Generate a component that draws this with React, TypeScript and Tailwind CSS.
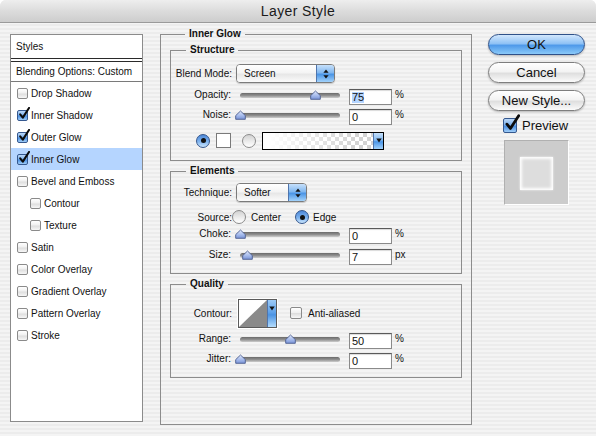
import React from "react";

type CbSize = "s" | "m" | "l";

function CheckBox({ checked, size = "s" }: { checked?: boolean; size?: CbSize }) {
  const box =
    size === "l" ? "w-[14px] h-[15px]" : size === "m" ? "w-[12px] h-[12px]" : "w-[11px] h-[11px]";
  const svgBox =
    size === "l"
      ? "absolute left-[1px] top-[-4px] w-[16px] h-[18px]"
      : "absolute left-[1px] top-[-3px] w-[12px] h-[13px]";
  return (
    <span className={`relative inline-block shrink-0 ${box}`}>
      <span
        className={`block w-full h-full rounded-[2px] border ${
          checked
            ? "border-[#35588f] bg-[linear-gradient(#bcd8f8,#7db2ee_45%,#4a8fe2_55%,#9fcdf8)]"
            : "border-[#8a8a8a] bg-[linear-gradient(#ffffff,#f0f0f0_45%,#dedede_55%,#f7f7f7)]"
        }`}
      />
      {checked && (
        <svg className={svgBox} viewBox="0 0 12 13" fill="none">
          <path
            d="M2.2 7.4 L4.8 10.6 L11 1"
            stroke="#0c0c0c"
            strokeWidth="2.1"
            strokeLinecap="round"
            strokeLinejoin="round"
          />
        </svg>
      )}
    </span>
  );
}

function Radio({ on }: { on?: boolean }) {
  return (
    <span
      className={`w-[14px] h-[14px] rounded-full border flex items-center justify-center shrink-0 ${
        on
          ? "border-[#34568c] bg-[linear-gradient(#4d88d8,#7fb4ef_55%,#c8e4fd)]"
          : "border-[#8a8a8a] bg-[linear-gradient(#d2d2d2,#ececec_55%,#ffffff)]"
      }`}
    >
      {on && <span className="w-[5px] h-[5px] rounded-full bg-[#111]" />}
    </span>
  );
}

function UpDown() {
  return (
    <svg width="6" height="10" viewBox="0 0 6 10">
      <path d="M3 0.5 L5.6 3.8 H0.4 Z" fill="#111" />
      <path d="M3 9.5 L5.6 6.2 H0.4 Z" fill="#111" />
    </svg>
  );
}

function Down() {
  return (
    <svg width="6" height="5" viewBox="0 0 6 5">
      <path d="M0.3 0.5 H5.7 L3 4.6 Z" fill="#111" />
    </svg>
  );
}

function Popup({ label, w }: { label: string; w: string }) {
  return (
    <div
      className={`flex h-[19px] ${w} rounded-[4px] border border-[#7b7b7b] overflow-hidden shadow-[0_1px_1px_rgba(0,0,0,0.18)]`}
    >
      <div className="flex-1 flex items-center pl-[7px] text-[10px] bg-[linear-gradient(#ffffff,#f4f4f4_45%,#e7e7e7_55%,#fbfbfb)]">
        {label}
      </div>
      <div className="w-[18px] border-l border-[#4f75ad] flex items-center justify-center bg-[linear-gradient(#c6e0fb,#82b8f0_45%,#4b95e6_55%,#a2d2fb)]">
        <UpDown />
      </div>
    </div>
  );
}

function Slider({ pos }: { pos: number }) {
  return (
    <div className="relative w-[113px] h-[11px] flex items-center">
      <div className="ml-[4px] w-[100px] h-[5px] rounded-full bg-[linear-gradient(#6a6a6a,#8f8f8f_50%,#cdcdcd)]" />
      <svg
        className="absolute top-[0px]"
        style={{ left: 4 + pos - 5.5 }}
        width="11"
        height="10"
        viewBox="0 0 11 10"
      >
        <defs>
          <linearGradient id={`tg${pos}`} x1="0" y1="0" x2="0" y2="1">
            <stop offset="0" stopColor="#dfe7fa" />
            <stop offset="0.55" stopColor="#a7bcec" />
            <stop offset="1" stopColor="#7893d6" />
          </linearGradient>
        </defs>
        <path
          d="M0.7 9.3 V5.6 L5.5 1 L10.3 5.6 V9.3 Z"
          fill={`url(#tg${pos})`}
          stroke="#4b5c8e"
          strokeWidth="0.9"
          strokeLinejoin="round"
        />
      </svg>
    </div>
  );
}

function Input({ value, selected }: { value: string; selected?: boolean }) {
  return (
    <div className="w-[43px] h-[16px] bg-white border border-[#8a8a8a] border-t-[#5a5a5a] flex items-center pl-[2px] text-[11px] leading-none shadow-[inset_0_1px_1px_rgba(0,0,0,0.15)]">
      <span className={selected ? "bg-[#b5d5ff]" : ""}>{value}</span>
    </div>
  );
}

function SliderRow({
  label,
  pos,
  value,
  unit,
  selected,
}: {
  label: string;
  pos: number;
  value: string;
  unit: string;
  selected?: boolean;
}) {
  return (
    <div className="flex items-start h-[16px]">
      <div className="w-[60px] text-right text-[10px] leading-[11px]">{label}</div>
      <div className="ml-[5px] mt-[1px]">
        <Slider pos={pos} />
      </div>
      <Input value={value} selected={selected} />
      <span className="ml-[3px] text-[10px] leading-[11px]">{unit}</span>
    </div>
  );
}

function Legend({ children }: { children: React.ReactNode }) {
  return (
    <legend className="ml-[15px] px-[4px] text-[10px] font-bold leading-[14px]">{children}</legend>
  );
}

const items: { label: string; checked?: boolean; active?: boolean; indent?: boolean }[] = [
  { label: "Drop Shadow" },
  { label: "Inner Shadow", checked: true },
  { label: "Outer Glow", checked: true },
  { label: "Inner Glow", checked: true, active: true },
  { label: "Bevel and Emboss" },
  { label: "Contour", indent: true },
  { label: "Texture", indent: true },
  { label: "Satin" },
  { label: "Color Overlay" },
  { label: "Gradient Overlay" },
  { label: "Pattern Overlay" },
  { label: "Stroke" },
];

function AquaButton({ children, primary }: { children: React.ReactNode; primary?: boolean }) {
  return (
    <div
      className={`w-[97px] h-[21px] rounded-full border flex items-center justify-center text-[13px] leading-none shadow-[0_1px_2px_rgba(0,0,0,0.25)] ${
        primary
          ? "border-[#2f5189] bg-[linear-gradient(#d2e7fd,#8fc2f5_45%,#4f9aea_55%,#8bcaf9)]"
          : "border-[#7e7e7e] bg-[linear-gradient(#ffffff,#f3f3f3_45%,#dfdfdf_55%,#fbfbfb)]"
      }`}
    >
      {children}
    </div>
  );
}

export default function App() {
  return (
    <div className="w-[596px] h-[436px] bg-white font-['Liberation_Sans',Arial,sans-serif] text-[#111]">
      <div className="w-full h-full rounded-t-[6px] overflow-hidden flex flex-col bg-[image:repeating-linear-gradient(180deg,#ececec_0px,#ececec_2px,#f4f4f4_2px,#f4f4f4_4px)]">
        {/* Title bar */}
        <div className="h-[23px] shrink-0 border-b border-[#9a9a9a] bg-[linear-gradient(#eeeeee,#dcdcdc_50%,#cdcdcd)] flex items-center justify-center">
          <span className="text-[14px] tracking-[0.4px] text-[#1a1a1a] leading-none">Layer Style</span>
        </div>

        <div className="flex items-start pl-[10px]">
          {/* Left styles list */}
          <div className="mt-[11px] w-[133px] h-[388px] border border-[#8b8b8b] bg-white flex flex-col">
            <div className="h-[23px] flex items-center pl-[5px] text-[10px]">Styles</div>
            <div className="h-[4px] border-y border-[#2a2a2a]" />
            <div className="h-[20px] border-b border-[#7a7a7a] flex items-center pl-[5px] text-[10px]">
              Blending Options: Custom
            </div>
            {items.map((it) => (
              <div
                key={it.label}
                className={`h-[22px] flex items-center gap-[3px] text-[10px] ${
                  it.indent ? "pl-[19px]" : "pl-[6px]"
                } ${it.active ? "bg-[#b5d5ff]" : ""}`}
              >
                <CheckBox checked={it.checked} />
                <span>{it.label}</span>
              </div>
            ))}
          </div>

          {/* Middle: Inner Glow */}
          <fieldset className="ml-[17px] mt-[4px] w-[312px] h-[398px] border border-[#8c8c8c] px-[9px]">
            <Legend>Inner Glow</Legend>

            <div className="flex flex-col gap-[3px] mt-[2px]">
              {/* Structure */}
              <fieldset className="h-[118px] border border-[#8c8c8c]">
                <Legend>Structure</Legend>
                <div className="flex flex-col">
                  <div className="flex items-center h-[19px] mt-[7px]">
                    <div className="w-[61px] text-right text-[10px]">Blend Mode:</div>
                    <div className="ml-[4px]">
                      <Popup label="Screen" w="w-[99px]" />
                    </div>
                  </div>
                  <div className="mt-[6px]">
                    <SliderRow label="Opacity:" pos={75} value="75" unit="%" selected />
                  </div>
                  <div className="mt-[4px]">
                    <SliderRow label="Noise:" pos={0} value="0" unit="%" />
                  </div>
                  <div className="mt-[7px] flex items-center h-[17px] pl-[25px]">
                    <Radio on />
                    <div className="ml-[6px] w-[15px] h-[15px] bg-white border border-[#7a7a7a]" />
                    <div className="ml-[11px]">
                      <Radio />
                    </div>
                    <div className="ml-[6px] flex h-[18px] border border-black">
                      <div className="w-[110px] bg-[image:linear-gradient(to_right,#ffffff_5%,rgba(255,255,255,0)_85%),repeating-conic-gradient(#d3d3d3_0_25%,#ffffff_0_50%)] bg-[length:100%_100%,8px_8px]" />
                      <div className="w-[10px] border-l border-[#4f75ad] flex items-center justify-center bg-[linear-gradient(#c6e0fb,#82b8f0_45%,#4b95e6_55%,#a2d2fb)]">
                        <Down />
                      </div>
                    </div>
                  </div>
                </div>
              </fieldset>

              {/* Elements */}
              <fieldset className="h-[110px] border border-[#8c8c8c]">
                <Legend>Elements</Legend>
                <div className="flex flex-col">
                  <div className="flex items-center h-[19px] mt-[5px]">
                    <div className="w-[61px] text-right text-[10px]">Technique:</div>
                    <div className="ml-[4px]">
                      <Popup label="Softer" w="w-[71px]" />
                    </div>
                  </div>
                  <div className="flex items-center h-[14px] mt-[8px] text-[10px]">
                    <div className="w-[61px] text-right">Source:</div>
                    <Radio />
                    <span className="ml-[5px]">Center</span>
                    <div className="ml-[14px]">
                      <Radio on />
                    </div>
                    <span className="ml-[4px]">Edge</span>
                  </div>
                  <div className="mt-[4px]">
                    <SliderRow label="Choke:" pos={0} value="0" unit="%" />
                  </div>
                  <div className="mt-[5px]">
                    <SliderRow label="Size:" pos={7} value="7" unit="px" />
                  </div>
                </div>
              </fieldset>

              {/* Quality */}
              <fieldset className="h-[101px] border border-[#8c8c8c]">
                <Legend>Quality</Legend>
                <div className="flex flex-col">
                  <div className="flex items-center h-[31px] mt-[7px]">
                    <div className="w-[61px] text-right text-[10px]">Contour:</div>
                    <div className="ml-[5px] p-px bg-white">
                      <div className="flex w-[39px] h-[29px] border border-[#5a5a5a]">
                        <svg width="28" height="27" viewBox="0 0 28 27" className="shrink-0">
                          <rect width="28" height="27" fill="#ffffff" />
                          <path d="M0 27 L28 0 L28 27 Z" fill="#8a8a8a" />
                        </svg>
                        <div className="flex-1 border-l border-[#4f75ad] flex justify-center pt-[6px] bg-[linear-gradient(#9ccaf6,#5fa2ea_45%,#4a93e4_55%,#b4dcfc)]">
                          <Down />
                        </div>
                      </div>
                    </div>
                    <div className="ml-[12px]">
                      <CheckBox size="m" />
                    </div>
                    <span className="ml-[6px] text-[10px]">Anti-aliased</span>
                  </div>
                  <div className="mt-[4px]">
                    <SliderRow label="Range:" pos={50} value="50" unit="%" />
                  </div>
                  <div className="mt-[4px]">
                    <SliderRow label="Jitter:" pos={0} value="0" unit="%" />
                  </div>
                </div>
              </fieldset>
            </div>
          </fieldset>

          {/* Right column */}
          <div className="ml-[16px] mt-[11px] flex flex-col">
            <AquaButton primary>OK</AquaButton>
            <div className="mt-[7px]">
              <AquaButton>Cancel</AquaButton>
            </div>
            <div className="mt-[7px]">
              <AquaButton>New Style...</AquaButton>
            </div>
            <div className="mt-[6px] ml-[15px] flex items-center h-[16px]">
              <CheckBox checked size="l" />
              <span className="ml-[5px] text-[13px] leading-none">Preview</span>
            </div>
            <div className="mt-[7px] ml-[16px] w-[65px] h-[65px] border border-[#b0b0b0] border-r-white border-b-white bg-[#cccccc] flex flex-col">
              <div className="mt-[16px] ml-[15px] w-[33px] h-[33px] bg-[#dddddd] shadow-[inset_0_0_3px_2px_rgba(255,255,255,0.95),0_0_2px_rgba(255,255,255,0.8)]" />
            </div>
          </div>
        </div>
      </div>
    </div>
  );
}
